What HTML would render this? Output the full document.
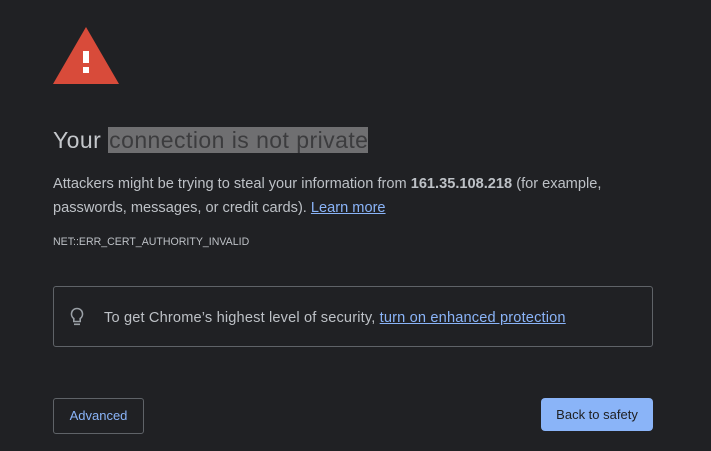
<!DOCTYPE html>
<html><head><style>
body{margin:0;background:#202124;width:711px;height:451px;overflow:hidden;font-family:"Liberation Sans",sans-serif;color:#bdc1c6;position:relative}
.a{position:absolute}
h1{position:absolute;left:53px;top:124px;margin:0;font-weight:normal;font-size:23px;line-height:32px;color:#c4c7cb;white-space:nowrap;letter-spacing:0.45px}
h1 span{background:#6f6f71;color:#3c3c3e;padding:0 0 0 1px}
.p{left:53px;top:172px;font-size:14.6px;line-height:24px;width:600px}
a{color:#8ab4f8;text-decoration:underline}
.code{left:53px;top:236px;font-size:10.6px;color:#bdc1c6}
.box{left:53px;top:286px;width:598px;height:59px;border:1px solid #5f6368;border-radius:3px}
.btn1{left:53px;top:398px;width:89px;height:34px;border:1px solid #5f6368;border-radius:3px;color:#8ab4f8;font-size:13px;line-height:34px;text-align:center}
.btn2{left:541px;top:398px;width:112px;height:33px;background:#8ab4f8;border-radius:4px;color:#202124;font-size:13px;line-height:33px;text-align:center}
</style></head><body>
<svg class="a" style="left:53px;top:27px" width="66" height="57" viewBox="0 0 66 57"><polygon points="33,0 66,57 0,57" fill="#d84b3a"/><rect x="30" y="24" width="6" height="12" fill="#fff"/><rect x="30" y="40" width="6" height="6" fill="#fff"/></svg>
<h1>Your <span>connection is not private</span></h1>
<div class="a p">Attackers might be trying to steal your information from <b style="color:#bdc1c6">161.35.108.218</b> (for example, passwords, messages, or credit cards). <a>Learn more</a></div>
<div class="a code">NET::ERR_CERT_AUTHORITY_INVALID</div>
<div class="a box">
<svg class="a" style="left:16px;top:20px" width="14" height="20" viewBox="0 0 14 20"><path d="M7 1.5a5.5 5.5 0 0 0-3.2 10v3h6.4v-3A5.5 5.5 0 0 0 7 1.5z" fill="none" stroke="#9aa0a6" stroke-width="1.6"/><rect x="4" y="16.5" width="6" height="1.6" fill="#9aa0a6"/></svg>
<div class="a" style="left:50px;top:23px;font-size:14.6px;white-space:nowrap;letter-spacing:0.16px">To get Chrome’s highest level of security, <a>turn on enhanced protection</a></div>
</div>
<div class="a btn1">Advanced</div>
<div class="a btn2">Back to safety</div>
</body></html>
